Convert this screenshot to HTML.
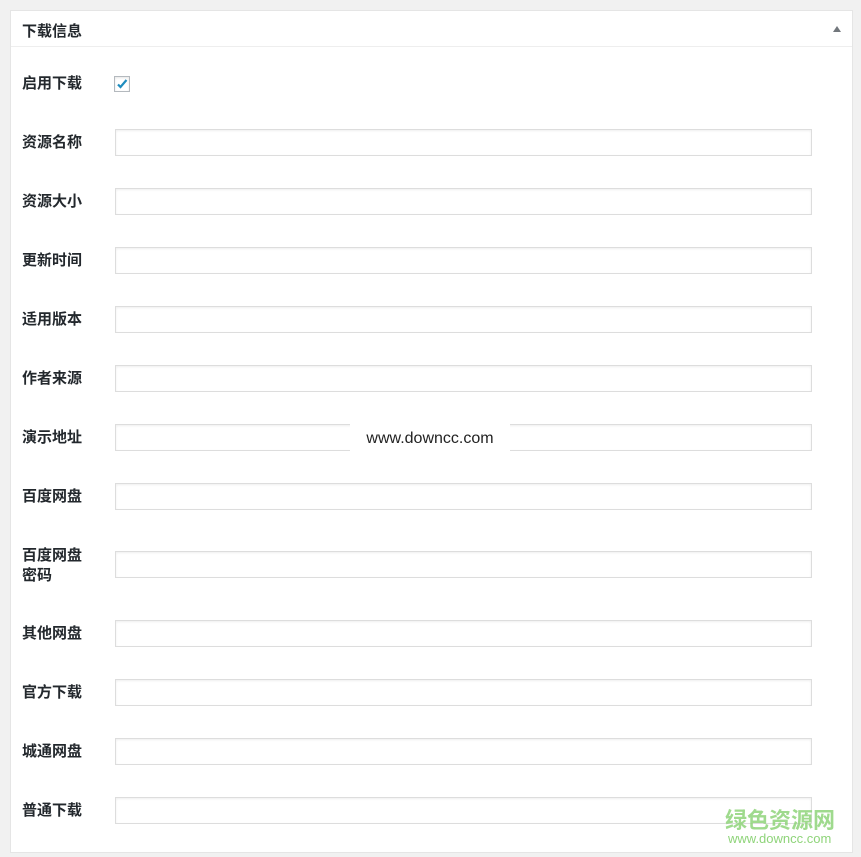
<!DOCTYPE html>
<html><head><meta charset="utf-8"><style>
body{margin:0;width:861px;height:857px;background:#f1f1f1;font-family:"Liberation Sans","Noto Sans CJK SC",sans-serif;position:relative;overflow:hidden}
.panel{position:absolute;left:10px;top:10px;width:841px;height:841px;background:#fff;border:1px solid #e5e5e5}
.hd{position:absolute;left:0;top:0;width:841px;height:35px;border-bottom:1px solid #eee}
.hd span{position:absolute;left:11px;top:9px;font-size:15px;font-weight:bold;color:#23282d}
.arr{position:absolute;right:11px;top:15px;width:0;height:0;border-left:4px solid transparent;border-right:4px solid transparent;border-bottom:6px solid #72777c}
.l{position:absolute;left:22px;font-size:15px;font-weight:bold;color:#23282d;line-height:20px}
.i{position:absolute;left:115px;width:695px;height:25px;border:1px solid #ddd;box-shadow:inset 0 1px 2px rgba(0,0,0,.07);background:#fff}
.cb{position:absolute;left:114px;top:76px;width:14px;height:14px;border:1px solid #b4b9be;box-shadow:inset 0 1px 2px rgba(0,0,0,.1)}
</style></head><body>
<div class="panel"><div class="hd"><span>下载信息</span><div class="arr"></div></div></div>
<div class="l" style="top:74px">启用下载</div>
<div class="cb"><svg width="14" height="14" viewBox="0 0 14 14"><path d="M3 7.5l2.5 2.5L11.5 3" stroke="#1e8cbe" stroke-width="2.2" fill="none"/></svg></div>
<div class="l" style="top:133px">资源名称</div><div class="i" style="top:129px"></div>
<div class="l" style="top:192px">资源大小</div><div class="i" style="top:188px"></div>
<div class="l" style="top:251px">更新时间</div><div class="i" style="top:247px"></div>
<div class="l" style="top:310px">适用版本</div><div class="i" style="top:306px"></div>
<div class="l" style="top:369px">作者来源</div><div class="i" style="top:365px"></div>
<div class="l" style="top:428px">演示地址</div><div class="i" style="top:424px"></div>
<div style="position:absolute;left:350px;top:422px;width:160px;height:32px;background:#fff;font-size:16px;color:#222;text-align:center;line-height:34px">www.downcc.com</div>
<div class="l" style="top:487px">百度网盘</div><div class="i" style="top:483px"></div>
<div class="l" style="top:546px">百度网盘<br>密码</div><div class="i" style="top:551px"></div>
<div class="l" style="top:624px">其他网盘</div><div class="i" style="top:620px"></div>
<div class="l" style="top:683px">官方下载</div><div class="i" style="top:679px"></div>
<div class="l" style="top:742px">城通网盘</div><div class="i" style="top:738px"></div>
<div class="l" style="top:801px">普通下载</div><div class="i" style="top:797px"></div>
<div style="position:absolute;left:725px;top:803px;font-size:22px;font-weight:bold;color:#8fd47a;opacity:.85">绿色资源网</div>
<div style="position:absolute;left:728px;top:831px;font-size:13px;color:#8fd47a">www.downcc.com</div>
</body></html>
